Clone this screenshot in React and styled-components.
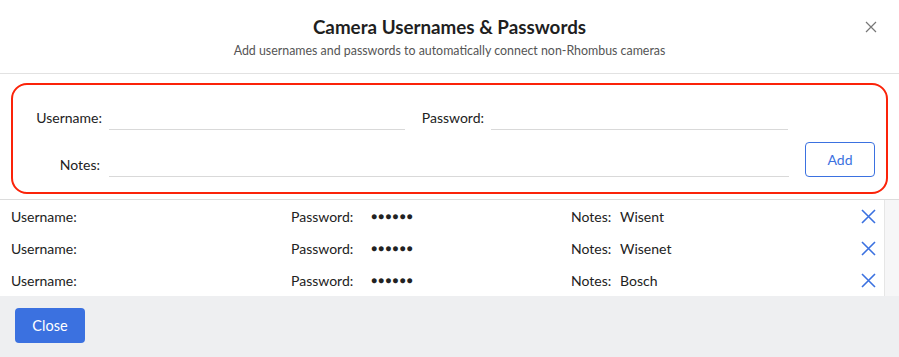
import styled, { createGlobalStyle } from "styled-components";

const GlobalStyle = createGlobalStyle`
  body {
    margin: 0;
    background: #fff;
    font-family: Lato, "Open Sans", sans-serif;
    color: #222;
  }
`;

const Modal = styled.div`
  width: 899px;
  height: 357px;
  display: flex;
  flex-direction: column;
  background: #fff;
`;

const Header = styled.header`
  height: 74px;
  border-bottom: 1px solid #e2e2e2;
  display: flex;
  flex-direction: column;
  align-items: center;
  position: relative;
  box-sizing: border-box;
  padding-top: 15px;
`;

const Title = styled.h1`
  margin: 0;
  font-size: 18.8px;
  font-weight: 700;
  line-height: 24px;
  color: #1f1f1f;
`;

const Subtitle = styled.p`
  margin: 4px 0 0;
  font-size: 12.4px;
  line-height: 16px;
  color: #555;
`;

const CloseIcon = styled.button`
  position: absolute;
  top: 21px;
  right: 22px;
  width: 12px;
  height: 12px;
  padding: 0;
  border: 0;
  background: none;
  display: flex;
`;

const FormBox = styled.div`
  margin: 9px 11px 0;
  height: 111px;
  box-sizing: border-box;
  border: 2px solid #fb2309;
  border-radius: 16px;
  padding: 18px 10px 0 9px;
  display: flex;
  flex-direction: column;
  gap: 12px;
`;

const FormRow = styled.div`
  display: flex;
  align-items: flex-end;
`;

const Label = styled.label`
  width: ${({ $width }) => $width}px;
  flex-shrink: 0;
  text-align: right;
  font-size: 14px;
  line-height: 24px;
  padding-top: 3px;
  margin-right: ${({ $gap }) => $gap ?? 7}px;
  margin-left: ${({ $offset }) => $offset || 0}px;
  color: #222;
`;

const Input = styled.input`
  width: ${({ $width }) => $width}px;
  height: 24px;
  box-sizing: border-box;
  border: 0;
  border-bottom: 1px solid #d9d9d9;
  outline: none;
  background: transparent;
  font: inherit;
  font-size: 14px;
`;

const OutlineButton = styled.button`
  margin-left: 16px;
  width: 70px;
  height: 35px;
  border: 1px solid #3b71e0;
  border-radius: 4px;
  background: #fff;
  color: #3b71e0;
  font-family: inherit;
  font-size: 14px;
`;

const List = styled.div`
  margin-top: 5px;
  border-top: 1px solid #dcdcdc;
  display: flex;
  height: 96px;
`;

const Rows = styled.div`
  flex: 1;
`;

const Track = styled.div`
  width: 14px;
  background: #f6f6f7;
  border-left: 1px solid #e6e6e6;
`;

const Row = styled.div`
  height: 32px;
  display: flex;
  align-items: center;
  padding-left: 11px;
  font-size: 14px;
`;

const Cell = styled.div`
  width: ${({ $width }) => ($width ? `${$width}px` : "auto")};
  display: flex;
  align-items: center;
`;

const CellLabel = styled.span`
  width: ${({ $width }) => $width}px;
`;

const Dots = styled.span`
  font-size: 10px;
  letter-spacing: 1.1px;
`;

const RemoveButton = styled.button`
  margin-left: auto;
  margin-right: 8px;
  width: 15px;
  height: 15px;
  padding: 0;
  border: 0;
  background: none;
  display: flex;
`;

const Footer = styled.footer`
  flex: 1;
  background: #eeeff1;
  padding: 12px 15px;
  box-sizing: border-box;
`;

const PrimaryButton = styled.button`
  width: 70px;
  height: 35px;
  border: 0;
  border-radius: 4px;
  background: #3b71e0;
  color: #fff;
  font-family: inherit;
  font-size: 14.5px;
`;

const XMark = ({ size, color, width }) => (
  <svg width={size} height={size} viewBox={`0 0 ${size} ${size}`}>
    <path
      d={`M1 1L${size - 1} ${size - 1}M${size - 1} 1L1 ${size - 1}`}
      stroke={color}
      strokeWidth={width}
      fill="none"
    />
  </svg>
);

const entries = [
  { notes: "Wisent" },
  { notes: "Wisenet" },
  { notes: "Bosch" },
];

export default function App() {
  return (
    <>
      <GlobalStyle />
      <Modal>
        <Header>
          <Title>Camera Usernames &amp; Passwords</Title>
          <Subtitle>
            Add usernames and passwords to automatically connect non-Rhombus cameras
          </Subtitle>
          <CloseIcon aria-label="Close">
            <XMark size={12} color="#777" width={1.2} />
          </CloseIcon>
        </Header>

        <FormBox>
          <FormRow>
            <Label $width={80}>Username:</Label>
            <Input $width={296} />
            <Label $width={66} $offset={13}>Password:</Label>
            <Input $width={297} />
          </FormRow>
          <FormRow>
            <Label $width={78} $gap={9}>Notes:</Label>
            <Input $width={680} />
            <OutlineButton>Add</OutlineButton>
          </FormRow>
        </FormBox>

        <List>
          <Rows>
            {entries.map((e) => (
              <Row key={e.notes}>
                <Cell $width={280}>
                  <CellLabel $width={80}>Username:</CellLabel>
                </Cell>
                <Cell $width={280}>
                  <CellLabel $width={80}>Password:</CellLabel>
                  <Dots>●●●●●●</Dots>
                </Cell>
                <Cell>
                  <CellLabel $width={49}>Notes:</CellLabel>
                  {e.notes}
                </Cell>
                <RemoveButton aria-label="Remove">
                  <XMark size={15} color="#3b71e0" width={1.6} />
                </RemoveButton>
              </Row>
            ))}
          </Rows>
          <Track />
        </List>

        <Footer>
          <PrimaryButton>Close</PrimaryButton>
        </Footer>
      </Modal>
    </>
  );
}
